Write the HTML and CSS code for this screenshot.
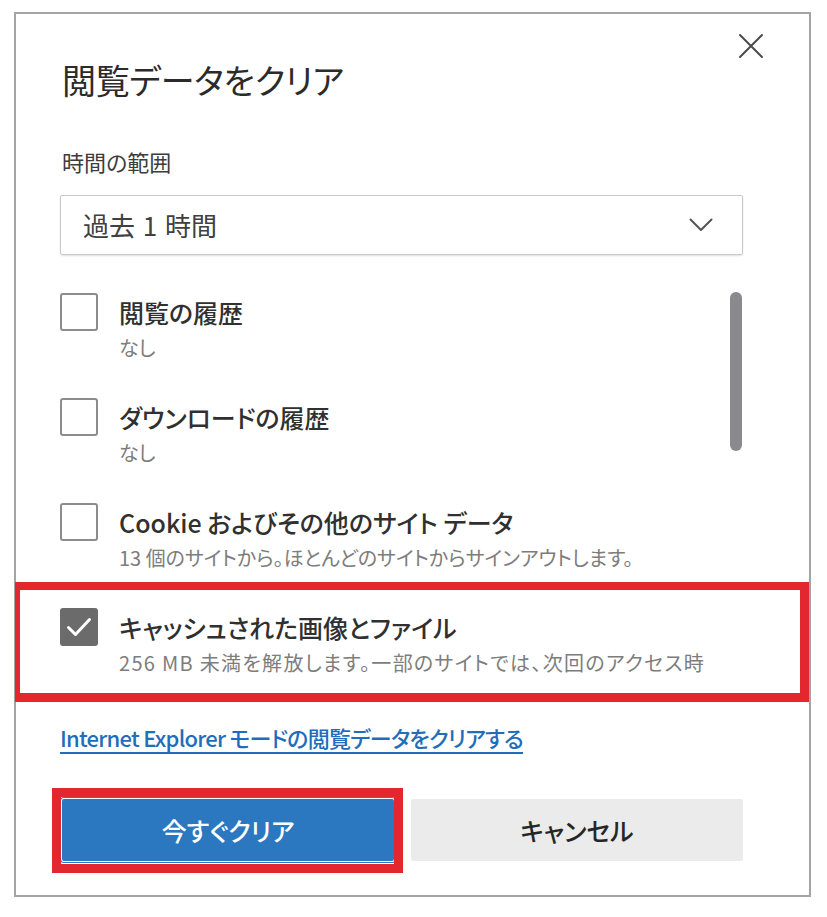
FILE: index.html
```html
<!DOCTYPE html>
<html lang="ja">
<head>
<meta charset="utf-8">
<title>閲覧データをクリア</title>
<link rel="stylesheet" href="styles.css">
</head>
<body>
<div class="dialog">
  <button class="close" aria-label="閉じる">
    <svg width="26" height="26" viewBox="0 0 26 26"><path d="M2 2 L24 24 M24 2 L2 24" stroke="#4a4a4a" stroke-width="2" fill="none" stroke-linecap="round"/></svg>
  </button>
  <h1 class="title">閲覧データをクリア</h1>
  <div class="field-label">時間の範囲</div>
  <div class="select">
    <span class="select-text">過去 1 時間</span>
    <svg class="chevron" width="24" height="14" viewBox="0 0 24 14"><path d="M1.5 1.5 L12 12 L22.5 1.5" stroke="#555" stroke-width="2" fill="none" stroke-linecap="round" stroke-linejoin="round"/></svg>
  </div>
  <div class="list">
    <div class="item">
      <span class="box"></span>
      <div class="texts">
        <div class="label">閲覧の履歴</div>
        <div class="sub">なし</div>
      </div>
    </div>
    <div class="item">
      <span class="box"></span>
      <div class="texts">
        <div class="label">ダウンロードの履歴</div>
        <div class="sub">なし</div>
      </div>
    </div>
    <div class="item">
      <span class="box"></span>
      <div class="texts">
        <div class="label">Cookie およびその他のサイト データ</div>
        <div class="sub">13 個のサイトから。ほとんどのサイトからサインアウトします。</div>
      </div>
    </div>
    <div class="item">
      <span class="box checked">
        <svg width="28" height="22" viewBox="0 0 28 22"><path d="M3.5 11.5 L10.5 18.5 L24.5 3.5" stroke="#fff" stroke-width="3" fill="none" stroke-linecap="round" stroke-linejoin="round"/></svg>
      </span>
      <div class="texts">
        <div class="label">キャッシュされた画像とファイル</div>
        <div class="sub wide">256 MB 未満を解放します。一部のサイトでは、次回のアクセス時</div>
      </div>
    </div>
    <div class="scrollbar"></div>
  </div>
  <a class="link" href="#">Internet Explorer モードの閲覧データをクリアする</a>
  <div class="buttons">
    <button class="btn primary">今すぐクリア</button>
    <button class="btn secondary">キャンセル</button>
  </div>
  <div class="mark mark-item"></div>
  <div class="mark mark-button"></div>
</div>
</body>
</html>
```
FILE: styles.css
```css
* { box-sizing: border-box; }
html, body { margin: 0; padding: 0; background: #fff; }
body {
  font-family: "Noto Sans CJK JP", "Noto Sans", sans-serif;
  font-feature-settings: "palt";
  color: #333;
}
.dialog {
  position: relative;
  margin: 12px 0 0 14px;
  width: 797px;
  height: 885px;
  border: 2px solid #a4a4a4;
  background: #fff;
  padding: 44px 66px 0 44px;
}
.close {
  position: absolute;
  top: 19px;
  right: 45px;
  width: 26px;
  height: 26px;
  padding: 0;
  border: 0;
  background: none;
  line-height: 0;
}
.title {
  margin: 0 0 0 2px;
  font-size: 34px;
  line-height: 44px;
  font-weight: 400;
  color: #2b2b2b;
  letter-spacing: -0.3px;
}
.field-label {
  margin: 44px 0 0 2px;
  font-size: 22px;
  line-height: 30px;
  color: #3c3c3c;
}
.select {
  margin-top: 19px;
  height: 60px;
  border: 1px solid #c9c9c9;
  border-radius: 2px;
  box-shadow: 0 1px 2px rgba(0,0,0,0.12);
  display: flex;
  align-items: center;
  justify-content: space-between;
  padding: 0 29px 0 22px;
}
.select-text {
  font-size: 26px;
  line-height: 30px;
  color: #404040;
  word-spacing: 2px;
}
.chevron { display: block; }
.list {
  position: relative;
  margin-top: 38px;
  display: flex;
  flex-direction: column;
  gap: 36px;
}
.item {
  display: flex;
  align-items: flex-start;
  gap: 21px;
}
.box {
  flex: none;
  width: 38px;
  height: 38px;
  border: 2px solid #8c8c8c;
  border-radius: 3px;
  display: flex;
  align-items: center;
  justify-content: center;
}
.box.checked {
  background: #6b6b6b;
  border-color: #6b6b6b;
}
.texts { display: flex; flex-direction: column; }
.label {
  font-size: 25px;
  line-height: 38px;
  font-weight: 500;
  color: #303030;
}
.sub {
  margin-top: 3px;
  font-size: 20px;
  line-height: 28px;
  color: #7d7d7d;
}
.sub.wide {
  letter-spacing: 1.3px;
}
.scrollbar {
  position: absolute;
  top: -1px;
  right: 1px;
  width: 12px;
  height: 159px;
  border-radius: 6px;
  background: #8a8a8e;
}
.link {
  display: inline-block;
  margin-top: 43px;
  font-size: 22px;
  line-height: 34px;
  color: #1f6dbb;
  text-decoration: underline;
  text-underline-offset: 5px;
  text-decoration-thickness: 2px;
  font-weight: 500;
  letter-spacing: -0.75px;
}
.buttons {
  margin-top: 45px;
  display: flex;
  gap: 17px;
}
.btn {
  flex: 1;
  height: 62px;
  border: 0;
  border-radius: 2px;
  font-family: inherit;
  font-feature-settings: "palt";
  font-size: 25px;
  font-weight: 500;
}
.primary {
  background: #2b78c1;
  color: #fff;
  margin-left: 2px;
  box-shadow: 0 0 0 1px #fff, 0 0 0 2px #2b78c1;
}
.secondary {
  background: #ebebeb;
  color: #262626;
}
.mark {
  position: absolute;
  border: 0 solid #e2272e;
  pointer-events: none;
}
.mark-item {
  left: -1px;
  top: 568px;
  width: 794px;
  height: 120px;
  border-width: 8px 9px 9px 5px;
}
.mark-button {
  left: 36px;
  top: 774px;
  width: 351px;
  height: 85px;
  border-width: 9px;
}
```
